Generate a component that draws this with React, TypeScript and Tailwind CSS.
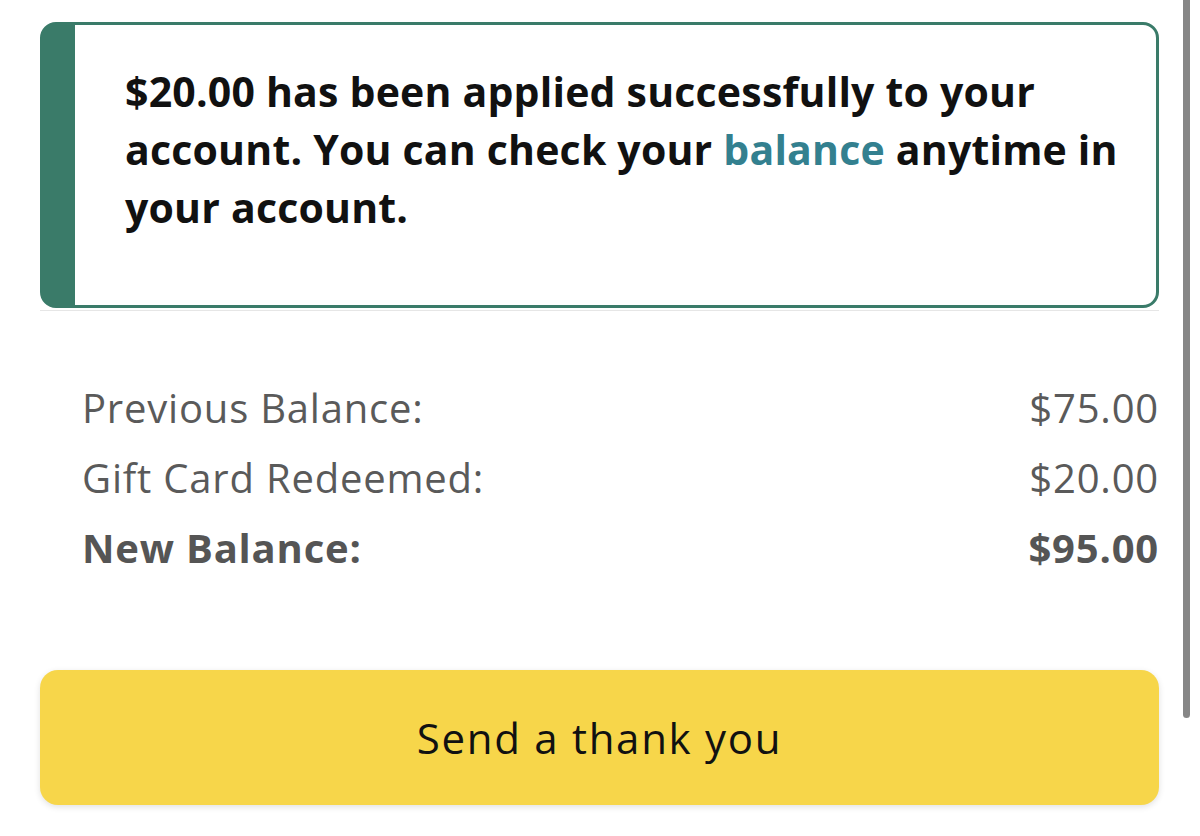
import React from "react";

const font = { fontFamily: '"Open Sans", "Noto Sans", Arial, sans-serif' };

function Row({ label, value, bold }: { label: string; value: string; bold?: boolean }) {
  const tone = bold ? "font-bold text-[#555]" : "text-[#5a5a5a]";
  return (
    <div className="flex items-baseline justify-between h-[70px]">
      <span className={tone}>{label}</span>
      <span className={tone}>{value}</span>
    </div>
  );
}

export default function App() {
  return (
    <div className="relative w-[1200px] h-[836px] bg-white overflow-hidden" style={font}>
      {/* scrollbar thumb */}
      <div className="absolute right-[10px] top-0 w-[7px] h-[718px] rounded-b-full bg-[#868686]" />

      <div className="pl-[40px] pr-[41px] pt-[22px]">
        {/* success alert */}
        <div className="rounded-[16px] border-[3px] border-l-[35px] border-[#3a7b69] bg-white h-[286px] pl-[50px] pr-[16px] pt-[37px]">
          <p className="text-[41px] leading-[58px] font-bold text-[#111] tracking-[0.2px]">
            $20.00 has been applied successfully to your account. You can check your{" "}
            <span className="text-[#33808f]">balance</span> anytime in your account.
          </p>
        </div>
        <div className="h-px bg-[#e6e6e6] mt-[2px]" />

        {/* balance summary */}
        <div className="mt-[75px] pl-[42px] text-[40px] leading-[44px] tracking-[0.8px]">
          <Row label="Previous Balance:" value="$75.00" />
          <Row label="Gift Card Redeemed:" value="$20.00" />
          <Row label="New Balance:" value="$95.00" bold />
        </div>

        {/* action */}
        <button className="mt-[74px] w-full h-[135px] rounded-[18px] bg-[#f7d64a] shadow-[0_2px_6px_rgba(0,0,0,0.12)] text-[42px] tracking-[1.7px] text-[#111] flex items-center justify-center">
          Send a thank you
        </button>
      </div>
    </div>
  );
}
